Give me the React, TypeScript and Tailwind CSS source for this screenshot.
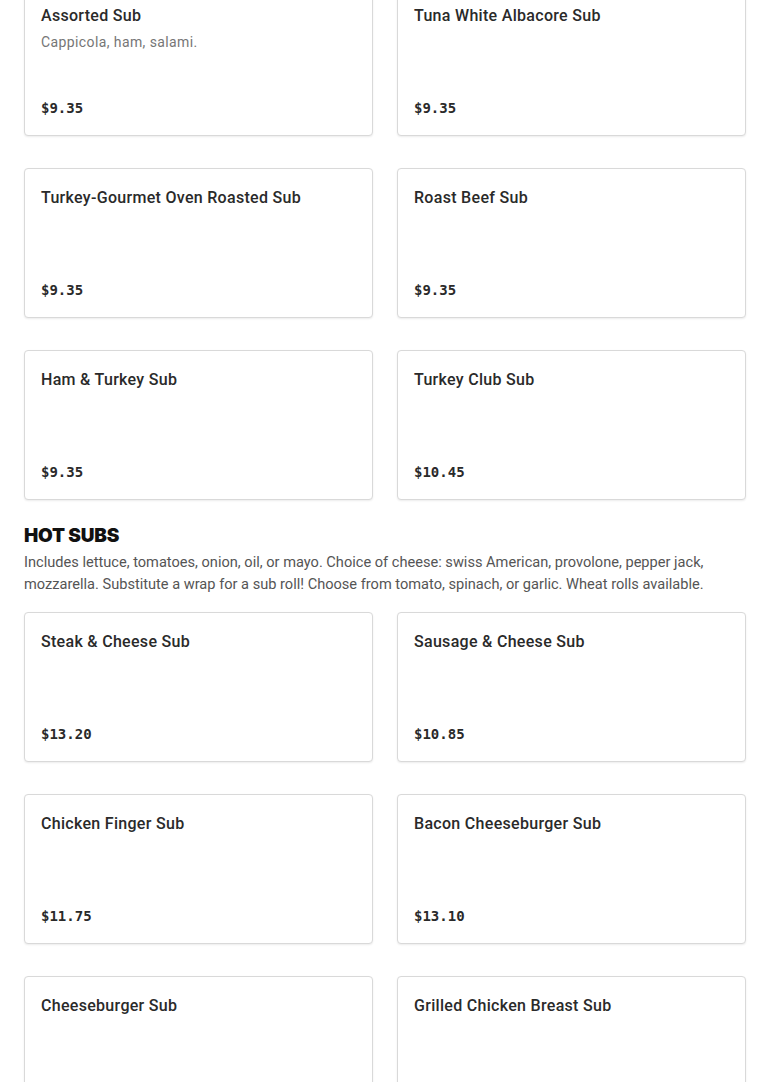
import React from "react";

interface Item {
    name: string,
    price: string,
    description?: string
}

const coldSubs: Item[] = [
    { name: "Assorted Sub", price: "$9.35", description: "Cappicola, ham, salami." },
    { name: "Tuna White Albacore Sub", price: "$9.35" },
    { name: "Turkey-Gourmet Oven Roasted Sub", price: "$9.35" },
    { name: "Roast Beef Sub", price: "$9.35" },
    { name: "Ham & Turkey Sub", price: "$9.35" },
    { name: "Turkey Club Sub", price: "$10.45" },
];

const hotSubs: Item[] = [
    { name: "Steak & Cheese Sub", price: "$13.20" },
    { name: "Sausage & Cheese Sub", price: "$10.85" },
    { name: "Chicken Finger Sub", price: "$11.75" },
    { name: "Bacon Cheeseburger Sub", price: "$13.10" },
    { name: "Cheeseburger Sub", price: "$12.10" },
    { name: "Grilled Chicken Breast Sub", price: "$12.65" },
];

function MenuCard({ item }: { item: Item }) {
    return (
        <div className="flex h-[150px] flex-col rounded-[4px] border border-[#d9d9d9] bg-white px-4 pt-[17px] pb-[15px] shadow-[0_1px_2px_rgba(0,0,0,0.08)]">
            <h3 className="text-[16px] leading-[24px] font-medium tracking-[0.3px] text-[#2a2a2a]">{item.name}</h3>
            {item.description && (
                <p className="mt-[4px] text-[14px] leading-[20px] tracking-[0.4px] text-[#767676]">{item.description}</p>
            )}
            <span className="mt-auto font-['DejaVu_Sans_Mono',monospace] text-[14px] leading-[24px] font-bold text-[#2a2a2a]">
                {item.price}
            </span>
        </div>
    );
}

export default function App() {
    return (
        <div className="h-[1082px] overflow-hidden bg-white px-6 font-['Roboto',sans-serif]">
            <div className="-mt-[14px] grid grid-cols-2 gap-x-6 gap-y-8">
                {coldSubs.map((item) => (
                    <MenuCard key={item.name} item={item} />
                ))}
            </div>

            <h2 className="mt-[22px] font-['Inter',sans-serif] text-[19px] leading-[28px] font-black tracking-[-0.2px] text-[#111]">HOT SUBS</h2>
            <p className="mt-[1px] text-[14.6px] leading-[22px] text-[#555]">
                Includes lettuce, tomatoes, onion, oil, or mayo. Choice of cheese: swiss American, provolone, pepper jack, mozzarella. Substitute a wrap for a sub roll! Choose from tomato, spinach, or garlic. Wheat rolls available.
            </p>

            <div className="mt-[17px] grid grid-cols-2 gap-x-6 gap-y-8">
                {hotSubs.map((item) => (
                    <MenuCard key={item.name} item={item} />
                ))}
            </div>
        </div>
    );
}
